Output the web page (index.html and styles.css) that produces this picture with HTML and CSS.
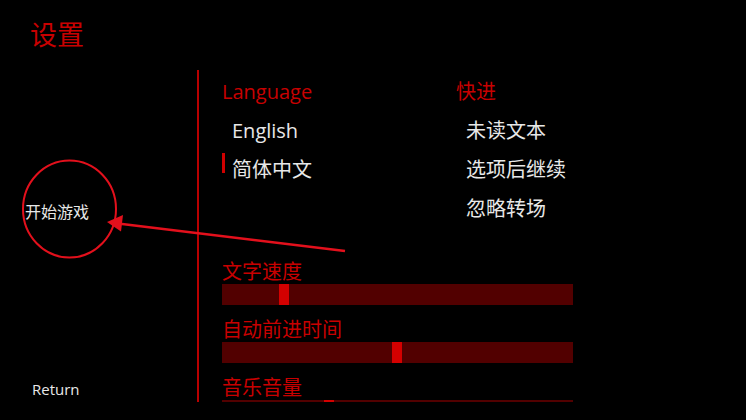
FILE: index.html
```html
<!DOCTYPE html>
<html lang="zh-CN">
<head>
<meta charset="utf-8">
<title>设置</title>
<link rel="stylesheet" href="styles.css">
</head>
<body>
<div class="screen">
  <header class="header"><h1 class="title">设置</h1></header>
  <div class="main">
    <nav class="nav">
      <div class="nav-item start">开始游戏</div>
      <div class="nav-item return">Return</div>
    </nav>
    <section class="panel">
      <div class="groups">
        <div class="group">
          <div class="row head">Language</div>
          <div class="row opt">English</div>
          <div class="row opt selected">简体中文</div>
        </div>
        <div class="group">
          <div class="row head">快进</div>
          <div class="row opt">未读文本</div>
          <div class="row opt">选项后继续</div>
          <div class="row opt">忽略转场</div>
        </div>
      </div>
      <div class="slider">
        <div class="slider-label">文字速度</div>
        <div class="bar"><div class="fill" style="width:57px"></div><div class="thumb"></div></div>
      </div>
      <div class="slider">
        <div class="slider-label">自动前进时间</div>
        <div class="bar"><div class="fill" style="width:170px"></div><div class="thumb"></div></div>
      </div>
      <div class="slider">
        <div class="slider-label">音乐音量</div>
        <div class="bar"><div class="fill" style="width:102px"></div><div class="thumb"></div></div>
      </div>
    </section>
  </div>
  <svg class="annot" width="746" height="420" viewBox="0 0 746 420">
    <ellipse cx="69.5" cy="209" rx="46.5" ry="48.5" fill="none" stroke="#e3101c" stroke-width="2"/>
    <line x1="345" y1="251" x2="118" y2="223.5" stroke="#e3101c" stroke-width="2.5"/>
    <polygon points="107,222 123,215 121,231.5" fill="#e3101c"/>
  </svg>
</div>
</body>
</html>
```
FILE: styles.css
```css
* { box-sizing: border-box; }
html, body {
  margin: 0;
  padding: 0;
  background: #000;
}
body {
  font-family: "Open Sans", "Noto Sans CJK SC", sans-serif;
  color: #e8e8e8;
}
.screen {
  position: relative;
  width: 746px;
  height: 420px;
  overflow: hidden;
  background: #000;
}
.header {
  height: 70px;
  padding: 17px 0 0 30px;
}
.title {
  margin: 0;
  font-size: 27px;
  font-weight: normal;
  line-height: 36px;
  color: #c80000;
}
.main {
  display: flex;
  height: 332px;
}
.nav {
  width: 197px;
  display: flex;
  flex-direction: column;
}
.nav-item {
  line-height: 20px;
  height: 20px;
}
.start {
  margin: 132px 0 0 25px;
  font-size: 16px;
}
.return {
  margin: auto 0 3px 32px;
  font-size: 15px;
}
.panel {
  flex: 1;
  border-left: 2px solid #b80000;
  padding: 2px 0 0 23px;
  overflow: hidden;
}
.groups {
  display: grid;
  grid-template-columns: 234px 1fr;
  height: 188px;
}
.row {
  height: 39px;
  line-height: 39px;
  font-size: 20px;
}
.head {
  color: #c80000;
}
.opt {
  position: relative;
  padding-left: 10px;
}
.opt.selected::before {
  content: "";
  position: absolute;
  left: 0;
  top: 3px;
  width: 3px;
  height: 20px;
  background: #d00000;
}
.slider {
  width: 351px;
  margin-bottom: 13px;
}
.slider-label {
  font-size: 20px;
  line-height: 24px;
  height: 24px;
  color: #c80000;
}
.bar {
  display: flex;
  height: 21px;
  background: #520000;
}
.fill {
  flex: none;
}
.thumb {
  flex: none;
  width: 10px;
  background: #d40000;
}
.annot {
  position: absolute;
  left: 0;
  top: 0;
  pointer-events: none;
}
```
